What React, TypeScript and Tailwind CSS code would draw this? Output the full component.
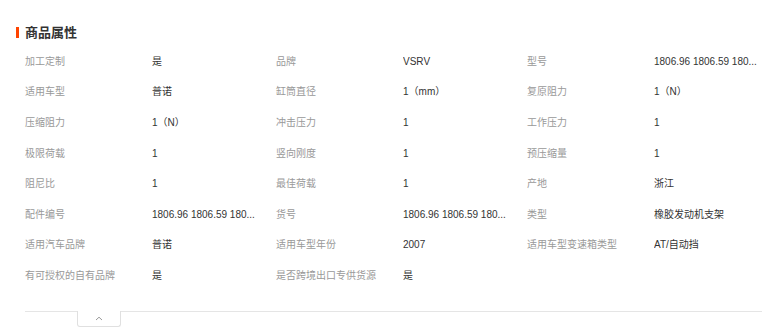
const rows: [string, string][][] = [
  [["加工定制", "是"], ["品牌", "VSRV"], ["型号", "1806.96 1806.59 180..."]],
  [["适用车型", "普诺"], ["缸筒直径", "1（mm）"], ["复原阻力", "1（N）"]],
  [["压缩阻力", "1（N）"], ["冲击压力", "1"], ["工作压力", "1"]],
  [["极限荷载", "1"], ["竖向刚度", "1"], ["预压缩量", "1"]],
  [["阻尼比", "1"], ["最佳荷载", "1"], ["产地", "浙江"]],
  [["配件编号", "1806.96 1806.59 180..."], ["货号", "1806.96 1806.59 180..."], ["类型", "橡胶发动机支架"]],
  [["适用汽车品牌", "普诺"], ["适用车型年份", "2007"], ["适用车型变速箱类型", "AT/自动挡"]],
  [["有可授权的自有品牌", "是"], ["是否跨境出口专供货源", "是"]],
];

export default function App() {
  return (
    <div
      className="w-[762px] h-[334px] bg-white overflow-hidden"
      style={{ fontFamily: '"Liberation Sans", "Noto Sans CJK SC", sans-serif' }}
    >
      <div className="flex items-center pt-[25px] pl-[16px] h-[39px]">
        <span className="w-[3px] h-[11px] bg-[#ff4400]" />
        <span className="ml-[6px] text-[13px] font-bold text-[#333] leading-none">商品属性</span>
      </div>

      <div className="pl-[25px] mt-[7px]">
        {rows.map((row, i) => (
          <div key={i} className="flex h-[30.6px] items-center">
            {row.map(([label, value]) => (
              <div key={label} className="flex w-[251px] shrink-0 items-center">
                <span className="w-[127px] shrink-0 text-[10px] text-[#999]">{label}</span>
                <span className="w-[112px] truncate text-[10px] text-[#333]">{value}</span>
              </div>
            ))}
          </div>
        ))}
      </div>

      <div className="ml-[25px] mt-[20px] border-t border-[#e5e5e5]">
        <div className="ml-[52px] -mt-px w-[44px] h-[16px] bg-white border border-t-0 border-[#e0e0e0] rounded-b-[3px] flex items-center justify-center">
          <svg width="8" height="5" viewBox="0 0 8 5" fill="none">
            <path d="M1 4L4 1.2L7 4" stroke="#999" strokeWidth="1" />
          </svg>
        </div>
      </div>
    </div>
  );
}
